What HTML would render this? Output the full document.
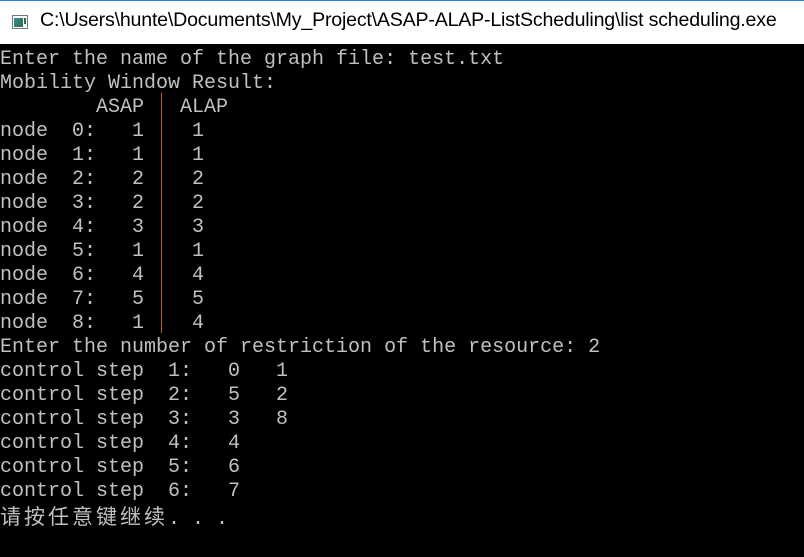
<!DOCTYPE html>
<html><head><meta charset="utf-8"><style>
html,body{margin:0;padding:0;width:804px;height:557px;overflow:hidden;background:#000}
.title{position:absolute;left:0;top:0;width:804px;height:44px;background:#fff;border-top:1px solid #2b88d8;box-sizing:border-box}
.title .t{position:absolute;left:40px;top:8px;font:19.6px "Liberation Sans",sans-serif;color:#000;white-space:nowrap;letter-spacing:-0.2px}
.icon{position:absolute;left:12px;top:14px;width:16px;height:14px;border:1px solid #777;box-sizing:border-box;background:#fff}
.icon:before{content:"";position:absolute;left:1px;top:2px;width:9px;height:9px;background:linear-gradient(135deg,#3a8a9a,#2d6e4a)}
.icon:after{content:"";position:absolute;left:11px;top:2px;width:2px;height:6px;background:#2d6e4a}
pre{position:absolute;left:0;top:48px;margin:0;font:20px/24px "Liberation Mono","Noto Sans CJK SC",monospace;color:#c0c0c0;white-space:pre}
.cjk{font-family:"Noto Sans CJK SC",sans-serif;font-size:21px;letter-spacing:3px}
.vl{position:absolute;left:161px;top:93px;width:1px;height:240px;background:#c05a28}
</style></head><body>
<div class="title"><div class="icon"></div><div class="t">C:\Users\hunte\Documents\My_Project\ASAP-ALAP-ListScheduling\list scheduling.exe</div></div>
<pre>Enter the name of the graph file: test.txt
Mobility Window Result:
        ASAP   ALAP
node  0:   1    1
node  1:   1    1
node  2:   2    2
node  3:   2    2
node  4:   3    3
node  5:   1    1
node  6:   4    4
node  7:   5    5
node  8:   1    4
Enter the number of restriction of the resource: 2
control step  1:   0   1
control step  2:   5   2
control step  3:   3   8
control step  4:   4
control step  5:   6
control step  6:   7
<span class="cjk">请按任意键继续</span>. . .</pre>
<div class="vl"></div>
</body></html>
